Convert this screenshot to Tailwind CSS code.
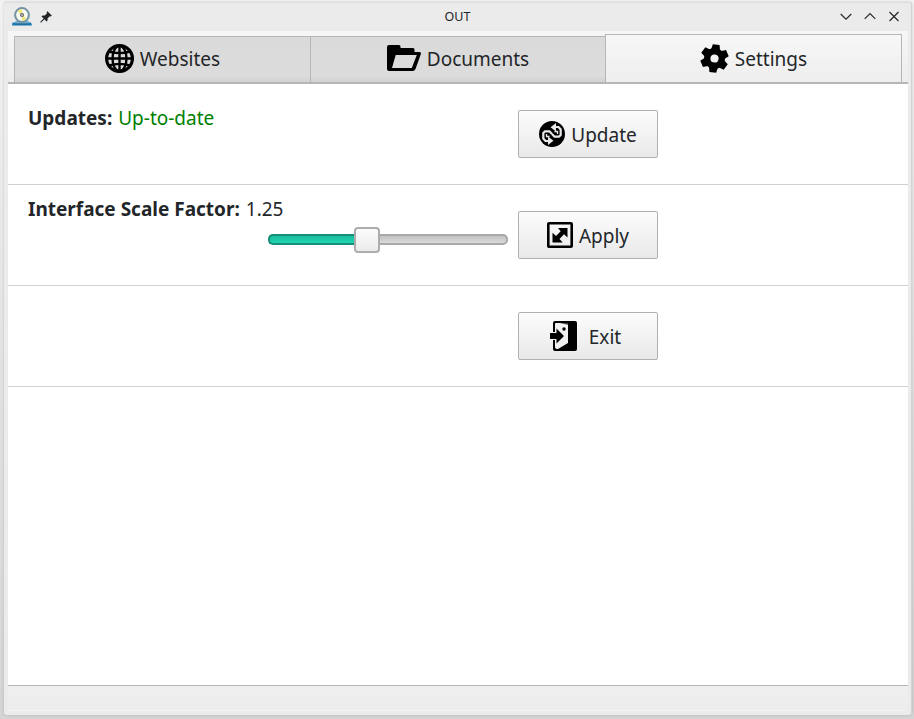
<!DOCTYPE html>
<html lang="en"><head><meta charset="utf-8"><title>OUT</title>
<script src="https://cdn.jsdelivr.net/npm/@tailwindcss/browser@4"></script></head>
<body class="w-[914px] h-[719px] overflow-hidden bg-linear-to-b from-[#f2f2f2] to-[#d4d4d4] pt-[2px] pl-[4px] font-['Noto_Sans',sans-serif] text-[19px] text-[#232629]">
<div class="w-[908px] h-[713px] bg-[#ebebeb] rounded-[3px] border-t border-r border-t-[#dcdcdc] border-r-[#d2d2d2] px-[4px] pb-[4px] flex flex-col shadow-[0_0_3px_rgba(0,0,0,0.16)]">
  <header class="h-[28px] shrink-0 grid grid-cols-[1fr_auto_1fr] items-center text-[12.5px]">
    <div class="flex items-center gap-[7px] pl-[3px]">
      <svg class="w-[22px] h-[20px]" viewBox="0 0 22 20"><path d="M1.500 15.500h18.500l1 2.900H1z" fill="#1678b4"/><path d="M4 14h14l-1 2.500H5z" fill="#6faed1"/><circle cx="11" cy="8" r="6.900" fill="#f8f8f2" stroke="#7392a3" stroke-width="2"/><path d="M11 8 6.500 4.400A6 6 0 0 1 11 2.100zM11 8l4.500 3.600A6 6 0 0 1 11 13.900z" fill="#eee77b"/><circle cx="11" cy="8" r="2" fill="#666"/><circle cx="11" cy="8" r=".8" fill="#fff"/><path d="M5 17h12" stroke="#35576b" stroke-dasharray="1.500 1"/></svg>
      <svg class="w-[12px] h-[12px]" viewBox="0 0 12 12" fill="#232629"><path d="M7.400.2 11.800 4.400 10.900 5.400 9.800 5.200 7.700 7.300 7.500 9.600 6.400 10.600 4.400 8.300.9 11.700.2 11 3.600 7.500 1.500 5.500 2.500 4.500 4.800 4.400 7 2.300 6.600 1.200z"/></svg>
    </div>
    <div>OUT</div>
    <div class="flex justify-end gap-[12px] pr-[7px]">
      <svg class="w-[12px] h-[12px]" viewBox="0 0 12 12" fill="none" stroke="#232629" stroke-width="1.150"><path d="m.7 3 5.300 5.200L11.300 3"/></svg>
      <svg class="w-[12px] h-[12px]" viewBox="0 0 12 12" fill="none" stroke="#232629" stroke-width="1.150"><path d="m.7 7.800L6 2.600l5.300 5.200"/></svg>
      <svg class="w-[12px] h-[12px]" viewBox="0 0 12 12" fill="none" stroke="#232629" stroke-width="1.150"><path d="m1.500 1 9 9m0-9-9 9"/></svg>
    </div>
  </header>
  <main class="w-[900px] flex-1 flex flex-col bg-white">
    <nav class="h-[53px] shrink-0 flex items-end px-[6px] bg-linear-to-b from-[#f6f6f6] to-[#ededed] border-b-2 border-[#b6b6b6]">
      <div class="w-[296px] h-[46px] pb-[3px] flex items-center justify-center gap-[6px] border-t border-l border-[#b6b6b6] bg-linear-to-b from-[#dadada] via-[#dcdcdc] via-85% to-[#d2d2d2]">
        <svg class="w-[29px] h-[29px]" viewBox="0 0 29 29" fill="none" stroke="#000" stroke-width="2.400"><circle cx="14.500" cy="14.500" r="12.900" stroke-width="3.200"/><ellipse cx="14.500" cy="14.500" rx="7" ry="12.800"/><path d="M14.500 2v25M1.500 14.500h26M4 7.500q10.500 3.200 21 0M4 21.500q10.500-3.200 21 0"/></svg><span class="pt-[3px]">Websites</span>
      </div>
      <div class="w-[295px] h-[46px] pb-[3px] flex items-center justify-center gap-[6px] border-t border-l border-[#b6b6b6] bg-linear-to-b from-[#dadada] via-[#dcdcdc] via-85% to-[#d2d2d2]">
        <svg class="w-[34px] h-[28px]" viewBox="0 0 34 28"><path fill="#000" fill-rule="evenodd" d="M2 1h10q1.500 0 1.500 1.500V4H26q1.500 0 1.500 1.500V8H32q2.500 0 1.800 2.200L28.500 25q-.8 2-3 2H2q-2 0-2-2V3q0-2 2-2zM8.700 11 5 24h19.800l5-13z"/></svg><span class="pt-[3px]">Documents</span>
      </div>
      <div class="w-[297px] h-[48px] flex items-center justify-center gap-[6px] border-t border-x border-[#b6b6b6] bg-linear-to-b from-[#f7f7f7] to-[#eeeeee]">
        <svg class="w-[29px] h-[29px]" viewBox="-14.5 -14.5 29 29"><g transform="rotate(7)" fill="#000"><path id="t" d="M-3.400-14h6.800l1.200 6h-9.200z"/><use href="#t" transform="rotate(60)"/><use href="#t" transform="rotate(120)"/><use href="#t" transform="rotate(180)"/><use href="#t" transform="rotate(240)"/><use href="#t" transform="rotate(300)"/><circle r="7.300" fill="none" stroke="#000" stroke-width="6.400"/></g></svg><span class="pt-[2px]">Settings</span>
      </div>
    </nav>
    <section class="h-[101px] border-b border-[#d0d0d0] flex">
      <div class="w-[510px] pl-[20px] pt-[20px]"><b>Updates:</b> <span class="ml-px text-[#008000]">Up-to-date</span></div>
      <button class="mt-[26px] w-[140px] h-[48px] rounded-[2px] border border-[#b0b0b0] bg-linear-to-b from-[#fcfcfc] to-[#e9e9e9] flex items-center justify-center gap-[6px]">
        <svg class="w-[26px] h-[26px]" viewBox="0 0 26 26"><circle cx="13" cy="13" r="13" fill="#000"/><g id="r"><path d="M13 13 10.500 10.300H6L4.300 12v5.500L6.500 20H9.500" fill="none" stroke="#e8e8e8" stroke-width="2.200"/><path d="M9 15.500v8.500l5.500-4.200z" fill="#e8e8e8"/><path d="M7.500 13v2.500h3" fill="none" stroke="#e8e8e8" stroke-width="1.300"/></g><use href="#r" transform="rotate(180 13 13)"/></svg><span class="pt-[2px]">Update</span>
      </button>
    </section>
    <section class="h-[101px] border-b border-[#d0d0d0] flex">
      <div class="w-[510px] pl-[20px] pt-[10px]"><div class="h-[29px]"><b>Interface Scale Factor:</b> <span class="ml-px">1.25</span></div>
        <div class="ml-[240px] mt-[2px] w-[240px] h-[27px] flex items-center">
          <div class="w-[88px] h-[11px] rounded-l-[5px] border-2 border-r-0 border-[#168f78] bg-linear-to-b from-[#1abc9c] to-[#20d5b2]"></div>
          <div class="w-[26px] h-[26px] -ml-[2px] z-10 rounded-[4px] border-2 border-[#adadad] bg-linear-to-b from-[#fcfcfc] to-[#ebebeb]"></div>
          <div class="flex-1 h-[11px] rounded-r-[5px] border-2 border-l-0 border-[#a9a9a9] bg-linear-to-b from-[#c2c2c2] to-[#dadada]"></div>
        </div>
      </div>
      <button class="mt-[26px] w-[140px] h-[48px] rounded-[2px] border border-[#b0b0b0] bg-linear-to-b from-[#fcfcfc] to-[#e9e9e9] flex items-center justify-center gap-[6px]">
        <svg class="w-[26px] h-[26px]" viewBox="0 0 26 26"><rect x="1.300" y="1.300" width="23.400" height="23.400" rx=".8" fill="none" stroke="#000" stroke-width="2.600"/><path d="M11 6h9.500v9.500L17 12.300 12.500 17l3.200 3.500H5.500v-9.700L9 14l4.700-4.700z"/></svg><span class="pt-[2px]">Apply</span>
      </button>
    </section>
    <section class="h-[101px] border-b border-[#d0d0d0] flex pl-[510px]">
      <button class="mt-[26px] w-[140px] h-[48px] rounded-[2px] border border-[#b0b0b0] bg-linear-to-b from-[#fcfcfc] to-[#e9e9e9] flex items-center justify-center gap-[11px] pr-[5px]">
        <svg class="w-[28px] h-[30px]" viewBox="0 0 28 30"><path d="M5 0h20q2 0 2 2v26q0 2-2 2H5q-2 0-2-2V2q0-2 2-2z"/><path d="M5.500 2H18V22L8 28q-3 0-3-2V4q0-2 .5-2z" fill="#f1f1f1"/><path d="M10 2.200h8l1 1.500z"/><path d="M0 12h6.500V7.500L14 15l-7.500 7.500V18H0z" stroke="#f1f1f1" stroke-width="2" paint-order="stroke"/><circle cx="14" cy="8" r="1.700"/></svg><span class="pt-[2px]">Exit</span>
      </button>
    </section>
    <footer class="h-[26px] mt-auto border-t border-[#b6b6b6] bg-linear-to-b from-[#f0f0f0] to-[#ececec] border-b border-b-[#f4f4f4]"></footer>
  </main>
</div>
</body></html></script>
